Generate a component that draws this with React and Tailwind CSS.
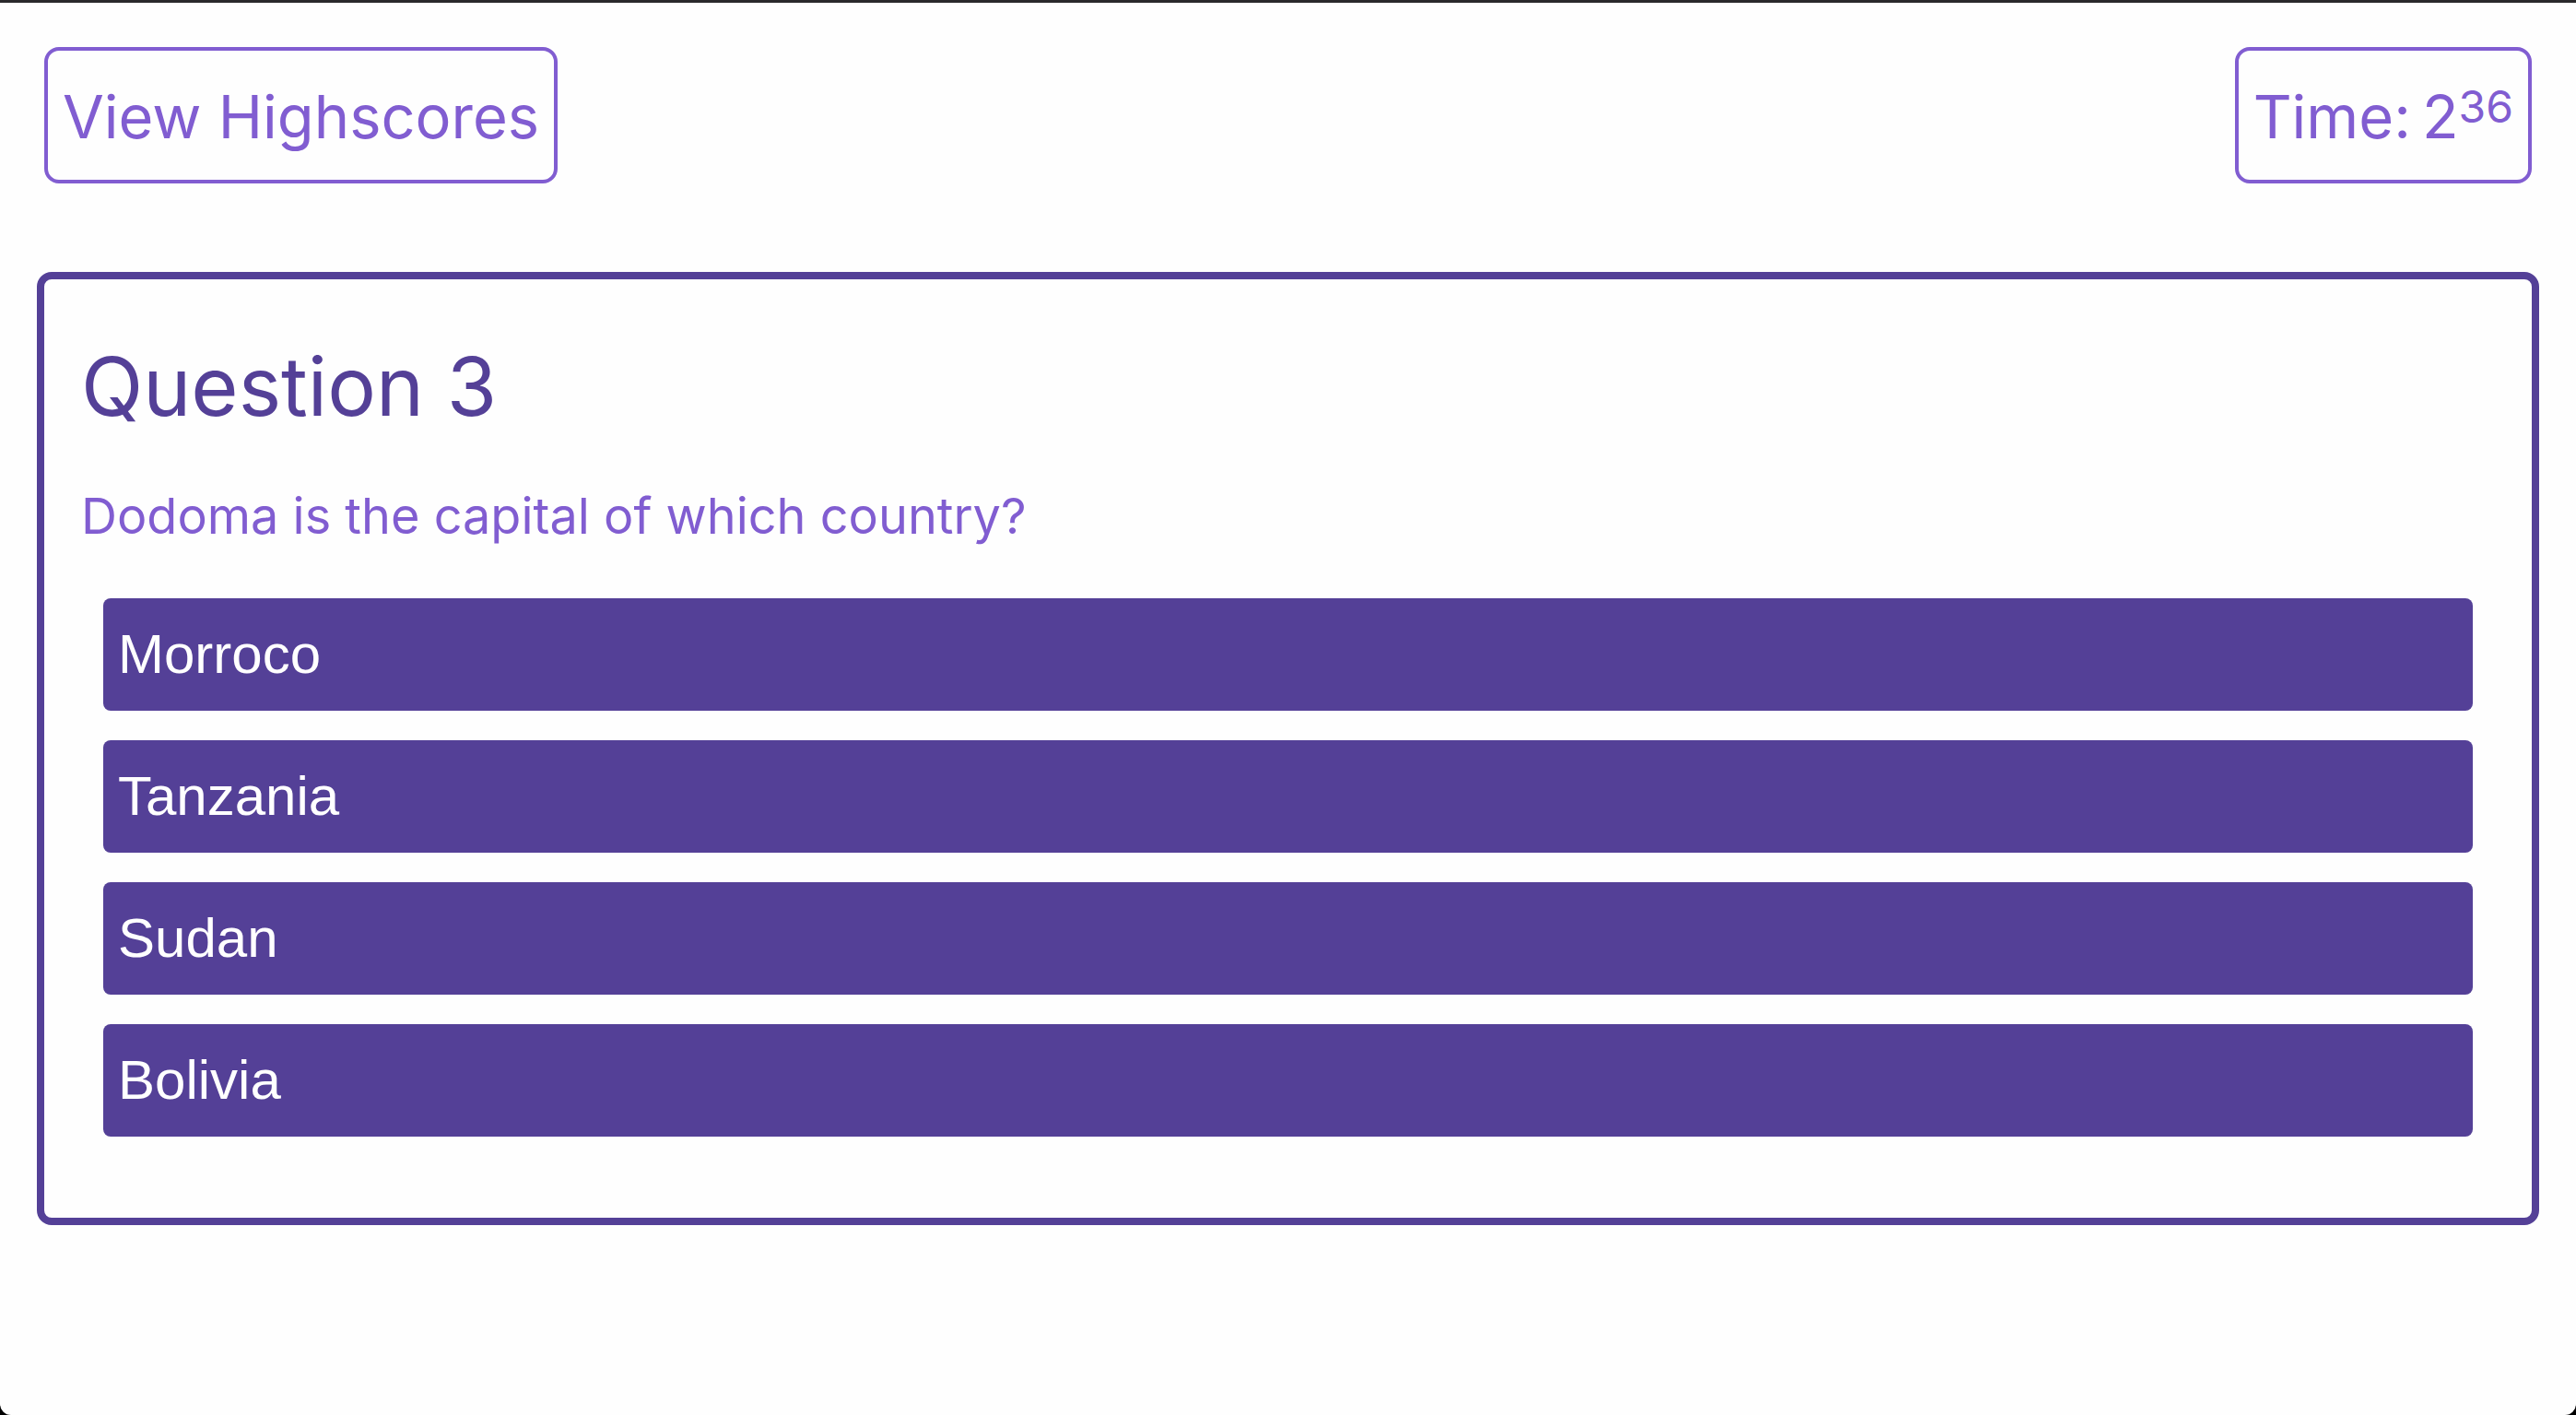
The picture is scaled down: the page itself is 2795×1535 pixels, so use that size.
const answers = ['Morroco', 'Tanzania', 'Sudan', 'Bolivia'];

export default function App() {
  return (
    <div className="min-h-screen bg-black font-['Inter',sans-serif]">
      <div className="min-h-screen rounded-b-xl border-t-3 border-[#2a292b] bg-[#fefefe] px-10 pt-12 pb-24">
        <header className="mb-24 flex items-start justify-between px-2 text-[65px] leading-[108px] text-[#815dd1]">
          <button type="button" className="cursor-pointer rounded-2xl border-4 border-[#815dd1] px-4 pt-[18px] pb-[14px]">
            View Highscores
          </button>
          <div className="flex rounded-2xl border-4 border-[#815dd1] px-4 pt-[18px] pb-[14px]">
            <span className="mr-3">Time:</span>
            <span>2</span>
            <span className="text-[48px] leading-[86px]">36</span>
          </div>
        </header>
        <main className="rounded-2xl border-8 border-[#544097] px-10 pt-14 pb-22">
          <h1 className="text-[88px] leading-[120px] text-[#544097]">Question 3</h1>
          <p className="mt-10 text-[54px] leading-[82px] text-[#815dd1]">
            Dodoma is the capital of which country?
          </p>
          <div className="mt-12 flex flex-col gap-8 px-6">
            {answers.map((answer) => (
              <button
                key={answer}
                type="button"
                className="cursor-pointer rounded-lg bg-[#544097] px-4 py-4 text-left font-['Liberation_Sans',sans-serif] text-[60px] leading-[90px] text-white"
              >
                {answer}
              </button>
            ))}
          </div>
        </main>
      </div>
    </div>
  );
}
